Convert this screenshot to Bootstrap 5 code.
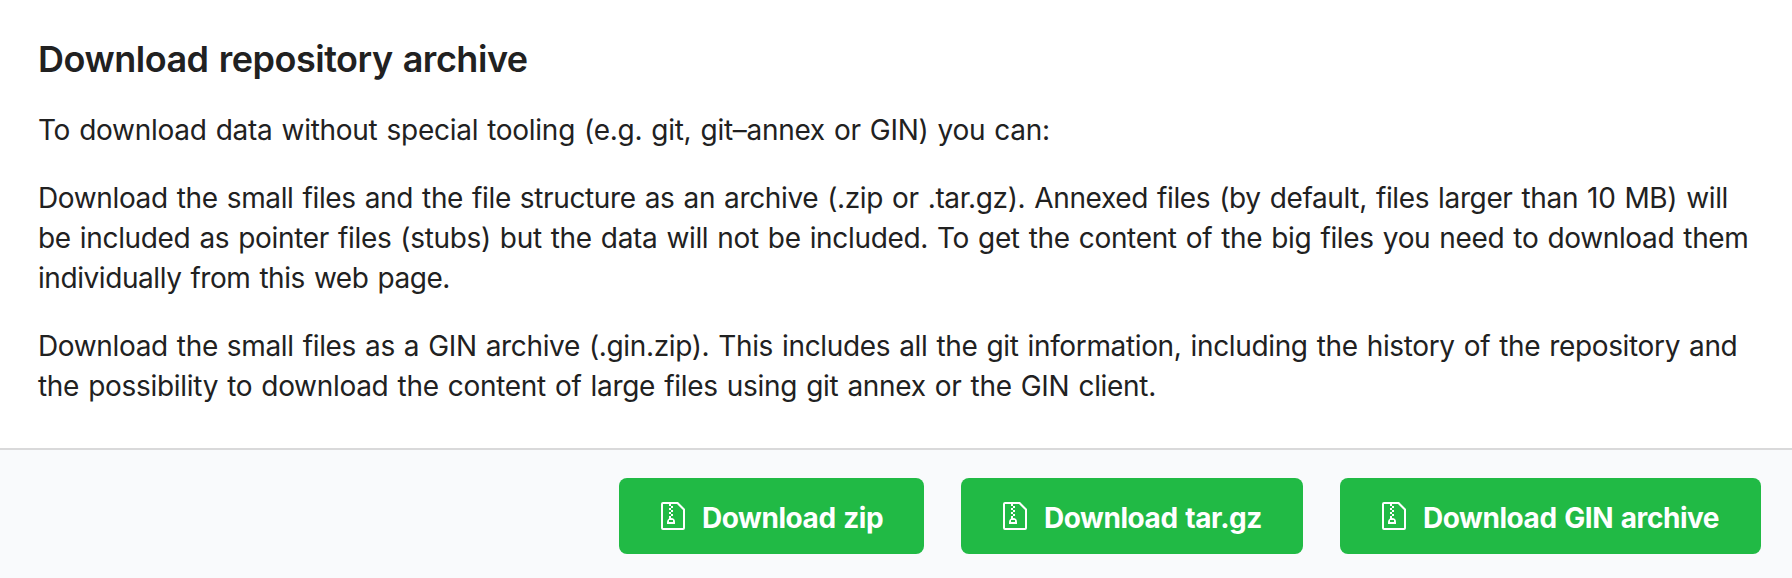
<!DOCTYPE html>
<html lang="en">
<head>
<meta charset="utf-8">
<meta name="viewport" content="width=device-width, initial-scale=1">
<title>Download repository archive</title>
<link rel="stylesheet" href="https://cdn.jsdelivr.net/npm/bootstrap@5.3.0/dist/css/bootstrap.min.css">
<style>
body { font-family: Inter, "Liberation Sans", sans-serif; font-size: 28px; line-height: 40px; color: #212121; background: #fff; }
.archive-panel { height: 578px; overflow: hidden; }
.archive-body { height: 448px; padding: 39px 36px 0 38px; word-spacing: 1.5px; }
.archive-title { font-size: 36px; font-weight: 600; line-height: 40px; letter-spacing: -.48px; margin: 0 0 31px; }
.archive-body p { margin: 0 0 28px; white-space: nowrap; }
.archive-body p span { display: block; }
.t1 { letter-spacing: -.28px; }
.t2 { letter-spacing: -.363px; }
.t3 { letter-spacing: -.338px; }
.t4 { letter-spacing: -.43px; }
.t5 { letter-spacing: -.352px; }
.t6 { letter-spacing: -.303px; }
.archive-actions { height: 130px; border-top: 2px solid #d9d9da; background: #f9fafc; padding: 28px 31px 0 0; gap: 37px; }
.btn-archive { --bs-btn-color: #fff; --bs-btn-bg: #21ba45; --bs-btn-hover-color: #fff; --bs-btn-hover-bg: #16ab39; --bs-btn-border-width: 0;
  --bs-btn-border-radius: 8px; --bs-btn-padding-x: 0; --bs-btn-padding-y: 0;
  height: 76px; font-size: 28px; font-weight: 700; line-height: 40px; letter-spacing: -.45px; word-spacing: 1.5px; white-space: nowrap; justify-content: flex-start; padding-left: 42px; }
.btn-archive svg { width: 24px; height: 32px; margin: 0 17px 0 0; flex: none; }
.btn-archive span { padding-top: 4px; }
.w-zip { width: 305px; }
.w-tar { width: 342px; }
.w-gin { width: 421px; }
</style>
</head>
<body>
<svg class="d-none" aria-hidden="true">
  <symbol id="file-zip" viewBox="0 0 12 16"><path fill="currentColor" d="M8.500 1H1a1 1 0 0 0-1 1v12a1 1 0 0 0 1 1h10a1 1 0 0 0 1-1V4.500L8.500 1zM11 14H1V2h3v1h1V2h3l3 3v9zM5 4V3h1v1H5zM4 4h1v1H4V4zm1 2V5h1v1H5zM4 6h1v1H4V6zm1 2V7h1v1H5zM4 9.280A2 2 0 0 0 3 11v1h4v-1a2 2 0 0 0-2-2V8H4v1.280zM6 10v1H4v-1h2z"/></symbol>
</svg>
<main class="archive-panel d-flex flex-column">
  <section class="archive-body">
    <h1 class="archive-title">Download repository archive</h1>
    <p><span class="t1">To download data without special tooling (e.g. git, git–annex or GIN) you can:</span></p>
    <p><span class="t2">Download the small files and the file structure as an archive (.zip or .tar.gz). Annexed files (by default, files larger than 10 MB) will</span>
      <span class="t3">be included as pointer files (stubs) but the data will not be included. To get the content of the big files you need to download them</span>
      <span class="t4">individually from this web page.</span></p>
    <p class="mb-0"><span class="t5">Download the small files as a GIN archive (.gin.zip). This includes all the git information, including the history of the repository and</span>
      <span class="t6">the possibility to download the content of large files using git annex or the GIN client.</span></p>
  </section>
  <footer class="archive-actions d-flex justify-content-end align-items-start">
    <button type="button" class="btn btn-archive w-zip d-flex align-items-center"><svg aria-hidden="true"><use href="#file-zip"/></svg><span>Download zip</span></button>
    <button type="button" class="btn btn-archive w-tar d-flex align-items-center"><svg aria-hidden="true"><use href="#file-zip"/></svg><span>Download tar.gz</span></button>
    <button type="button" class="btn btn-archive w-gin d-flex align-items-center"><svg aria-hidden="true"><use href="#file-zip"/></svg><span>Download GIN archive</span></button>
  </footer>
</main>
<script src="https://cdn.jsdelivr.net/npm/bootstrap@5.3.0/dist/js/bootstrap.bundle.min.js"></script>
</body>
</html>
